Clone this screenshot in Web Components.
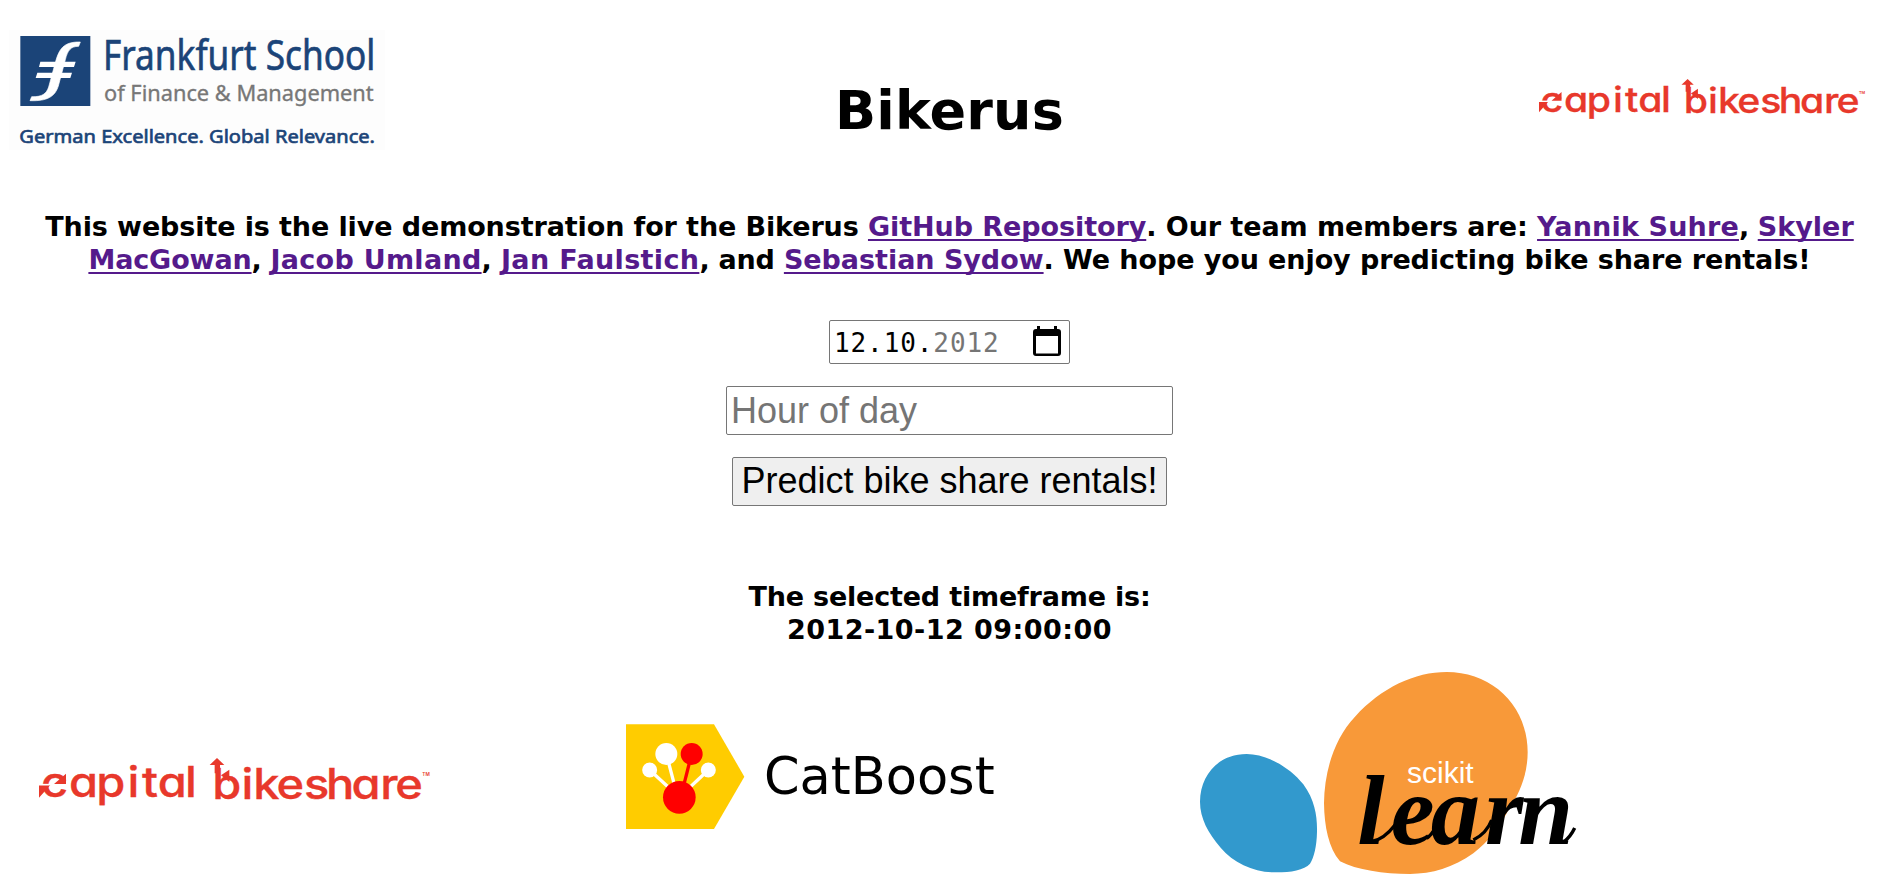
<!DOCTYPE html>
<html lang="en">
<head>
<meta charset="utf-8">
<title>Bikerus</title>
<style>
html,body{margin:0;height:100%;background:#fff;overflow:hidden}
</style>
</head>
<body>
<bikerus-app></bikerus-app>
<script>
const define = (name, html, setup) => {
  const t = document.createElement('template');
  t.innerHTML = html;
  customElements.define(name, class extends HTMLElement {
    constructor() {
      super();
      this.attachShadow({mode: 'open'}).append(t.content.cloneNode(true));
    }
    connectedCallback() { if (setup) setup(this); }
  });
};

/* One line of bold text; each run (data-w) is tracked to its own width */
define('text-line', `<style>
:host{display:block;width:max-content;white-space:pre;margin:0 auto}
::slotted(a){color:#551a8b;text-decoration:underline;text-decoration-thickness:2px;text-underline-offset:3px;text-decoration-skip-ink:none}
</style><slot></slot>`, el => {
  for (const run of el.querySelectorAll('[data-w]')) {
    const gap = +run.dataset.w - run.getBoundingClientRect().width;
    run.style.letterSpacing = gap / run.textContent.length + 'px';
  }
});

define('frankfurt-logo', `<style>
:host{display:block;width:376px;height:120px;background:#fdfdfd;font-weight:400}
svg{display:block;overflow:visible}text{font-family:"Noto Sans","Open Sans",sans-serif}
</style>
<svg width="376" height="120" viewBox="27 30 1128 360">
<rect x="61" y="48" width="210" height="210" fill="#1b4478"/>
<path d="M241 66C190 65 178 87 167 124L146 201C139 222 126 231 95 230L90 242C143 244 165 229 175 198L196 119C203 91 212 79 236 79Z" fill="#fff" stroke="#fff" stroke-width="2"/>
<path d="M121 125H227L222 141H117ZM112 158H216L211 174H107Z" fill="#fff"/>
<text x="309" y="150" font-size="126" fill="#1b4478" stroke="#1b4478" stroke-width="2" textLength="817" lengthAdjust="spacingAndGlyphs">Frankfurt School</text>
<text x="312" y="244" font-size="64" fill="#777" stroke="#777" stroke-width="1" textLength="809" lengthAdjust="spacingAndGlyphs">of Finance &amp; Management</text>
<text x="58" y="368" font-size="56" fill="#1b4478" stroke="#1b4478" stroke-width="2" textLength="1067" lengthAdjust="spacingAndGlyphs">German Excellence. Global Relevance.</text>
</svg>`);

define('bikeshare-logo', `<style>
:host{display:block;width:430px;height:80px}
svg{display:block;width:100%;height:100%}
text{font-family:Inter,Lato,sans-serif;font-weight:500;font-size:126px;font-feature-settings:"cv11" 1,"calt" 0}
</style>
<svg viewBox="0 0 1290 240" fill="#e8382b">
<g transform="scale(1.12 1)"><text stroke="#e8382b" stroke-width="1" y="172 172 172 172 172 172 172 172 176" x="56 131 204 288 327 369 442 475 515 593 625 687 761 820 888 965 1005">capital bikeshare</text></g>
<path d="M138 101V132H102ZM57 173V135H91Z"/>
<path d="M57 134H96" stroke="#fff" stroke-width="5"/>
<path d="M591 54L613 75H600V100H584V75H569ZM603 106L628 89V126Z"/>
<text x="1207" y="109" style="font-size:14px;font-weight:600">TM</text>
</svg>`);

define('catboost-logo', `<style>:host{display:block;width:400px;height:130px;font-weight:400}svg{display:block}</style>
<svg width="400" height="130" viewBox="0 0 1200 390">
<path d="M48 43H312L403 200L312 357H48Z" fill="#fc0"/>
<path d="M119 180L208 262L295 180M169 132L200 250" fill="none" stroke="#fff" stroke-width="10"/>
<path d="M245 132L215 250" stroke="red" stroke-width="10"/>
<g fill="#fff"><circle cx="169" cy="132" r="33"/><circle cx="119" cy="180" r="22.500"/><circle cx="295" cy="180" r="22.500"/></g>
<g fill="red"><circle cx="245" cy="132" r="33"/><circle cx="208" cy="262" r="49"/></g>
<text x="462" y="252" font-family="DejaVu Sans,sans-serif" font-size="156" textLength="692" lengthAdjust="spacingAndGlyphs">CatBoost</text>
</svg>`);

define('scikit-logo', `<style>:host{display:block;width:420px;height:218px;font-weight:400}svg{display:block}</style>
<svg width="420" height="218" viewBox="0 0 1260 654">
<path d="M60 425C61 345 115 282 200 282C255 282 325 317 370 373C405 421 412 470 411 515C410 560 402 592 390 611C372 632 325 638 281 637C220 636 160 608 122 563C85 520 60 475 60 425Z" fill="#3299cd"/>
<path d="M432 430C433 335 462 236 525 170C605 82 705 36 800 36C935 36 1043 135 1043 277C1043 340 1020 400 985 450C960 500 925 545 880 580C820 623 755 642 690 642C610 642 530 630 480 604C446 565 433 500 432 430Z" fill="#f89939"/>
<text x="681" y="368" font-family="Liberation Sans,Arial,sans-serif" font-size="91" fill="#fff" textLength="200" lengthAdjust="spacingAndGlyphs">scikit</text>
<text y="551" x="532 632 752 915 1015" font-family="Liberation Serif,serif" font-weight="700" font-style="italic" font-size="296">learn</text>
<path d="M575 544Q610 540 645 495M740 535Q755 525 765 505M880 540Q920 520 935 480M1150 547Q1172 530 1184 504" fill="none" stroke="#000" stroke-width="10"/>
</svg>`);

define('date-field', `<style>
:host{display:flex;box-sizing:border-box;width:241px;height:44px;border:1px solid #767676;border-radius:2px;padding:0 8px 0 4px;align-items:center;justify-content:space-between;background:#fff;font-weight:400}
.v{font:26px/42px "DejaVu Sans Mono","Liberation Mono",monospace;letter-spacing:.9px;white-space:pre;padding-top:2px}
.y{color:#757575}svg{display:block;margin-top:-1px}
</style><span class="v">12.10.<span class="y">2012</span></span>
<svg width="28" height="31" viewBox="0 0 28 31"><path d="M4 0H7V3H21V0H24V3H25Q28 3 28 6V27Q28 30 25 30H3Q0 30 0 27V6Q0 3 3 3H4ZM3 10V27.500H25V10Z" fill-rule="evenodd"/></svg>`);

define('hour-field', `<style>
:host{display:block}
input{display:block;box-sizing:border-box;width:447px;height:49px;margin:0;border:1px solid #767676;border-radius:2px;padding:1px 4px;font:36px "Liberation Sans",Arial,sans-serif;background:#fff;outline:0}
input::placeholder{color:#757575;opacity:1}
</style><input type="text" placeholder="Hour of day">`);

define('predict-button', `<style>
:host{display:block}
button{display:block;box-sizing:border-box;width:435px;height:49px;margin:0;border:1px solid #767676;border-radius:2px;padding:0 0 1px;font:36px "Liberation Sans",Arial,sans-serif;background:#efefef;color:#000;white-space:nowrap}
</style><button><slot></slot></button>`);

define('bikerus-app', `<style>
:host{display:flex;flex-direction:column;width:1893px;height:878px;overflow:hidden;background:#fff;color:#000;font:700 27px/33px "DejaVu Sans",Verdana,sans-serif}
header{display:grid;grid-template-columns:523px 853px 517px;height:210px;flex:none}
frankfurt-logo{margin:30px 0 0 9px}
h1{margin:78px 0 0;font-size:54px;line-height:66px}
header bikeshare-logo{width:359.300px;height:66.800px;margin:64px 0 0 146.500px}
main{padding-left:6px;flex:none;height:463px}
form{display:flex;flex-direction:column;align-items:center;margin:44px 0 74px}
hour-field{margin:22px 0}
footer{display:flex;flex:1;align-items:flex-start}
footer bikeshare-logo{margin:67px 0 0 20px}
catboost-logo{margin:37px 0 0 160px}
scikit-logo{margin:-13px 0 0 170px}
</style>
<header><frankfurt-logo></frankfurt-logo>
<h1><text-line><span data-w="229">Bikerus</span></text-line></h1>
<bikeshare-logo></bikeshare-logo></header>
<main>
<text-line><span data-w="822.7">This website is the live demonstration for the Bikerus </span><a href="#" data-w="275.8">GitHub Repository</a><span data-w="390.8">. Our team members are: </span><a href="#" data-w="201.9">Yannik Suhre</a><span data-w="18.8">, </span><a href="#" data-w="96">Skyler</a></text-line>
<text-line><a href="#" data-w="163.2">MacGowan</a><span data-w="18.8">, </span><a href="#" data-w="211.2">Jacob Umland</a><span data-w="19.4">, </span><a href="#" data-w="198.4">Jan Faulstich</a><span data-w="84.5">, and </span><a href="#" data-w="258">Sebastian Sydow</a><span data-w="767">. We hope you enjoy predicting bike share rentals!</span></text-line>
<form><date-field></date-field><hour-field></hour-field><predict-button>Predict bike share rentals!</predict-button></form>
<text-line><span data-w="402">The selected timeframe is:</span></text-line>
<text-line><span data-w="325">2012-10-12 09:00:00</span></text-line>
</main>
<footer><bikeshare-logo></bikeshare-logo><catboost-logo></catboost-logo><scikit-logo></scikit-logo></footer>`);
</script>
</body>
</html>
